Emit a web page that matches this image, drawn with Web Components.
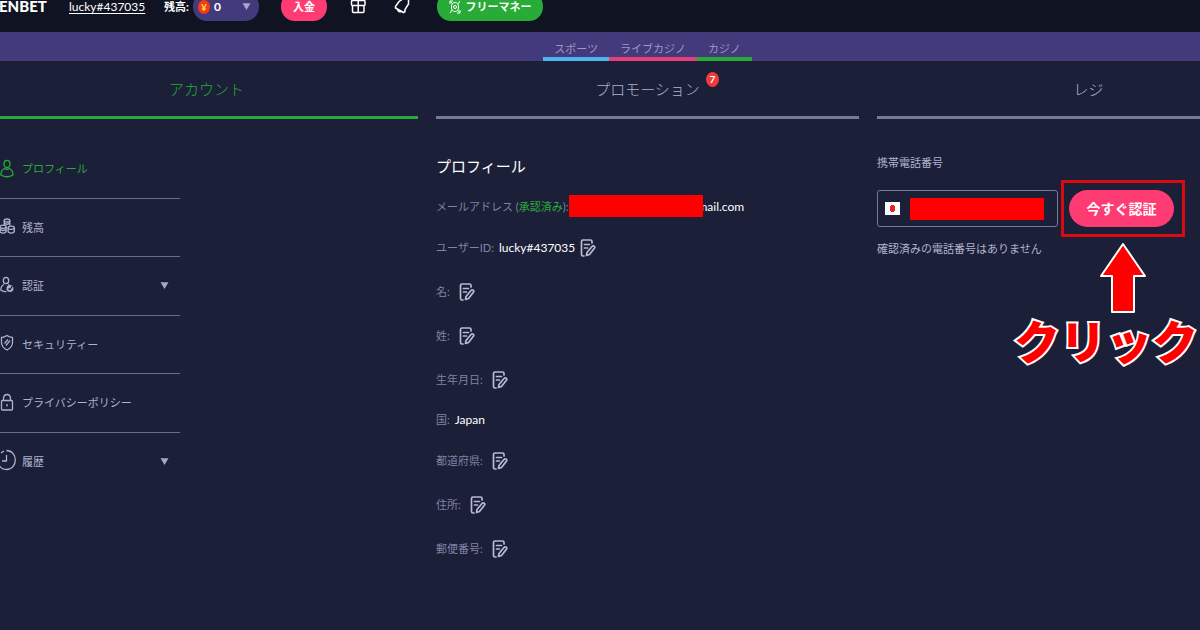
<!DOCTYPE html>
<html lang="ja">
<head>
<meta charset="utf-8">
<meta name="viewport" content="width=device-width, initial-scale=1">
<title>プロフィール</title>
<style>
:root{--bg:#1b1f38;--muted:#8083a3;--soft:#b0b3cf;--green:#29ab38;--pink:#ff3b73;--purple:#423a7a;--red:#f00}
html,body{margin:0;background:var(--bg)}
body{min-height:100vh;overflow:hidden;color:#fff;font:11px/17px Lato,"Noto Sans CJK JP",sans-serif}
</style>
</head>
<body>
<account-page></account-page>
<script>
const define = (name, html, setup) => {
  const t = document.createElement('template');
  t.innerHTML = '<style>*{box-sizing:border-box}a{color:inherit;text-decoration:none}button{font:inherit;color:inherit;border:0;padding:0;background:none}</style>' + html;
  customElements.define(name, class extends HTMLElement {
    constructor() {
      super();
      this.attachShadow({ mode: 'open' }).append(t.content.cloneNode(true));
    }
    connectedCallback() { if (setup) setup(this, this.shadowRoot); }
  });
};

const ICONS = {
  user: '<ellipse cx="7" cy="4" rx="3" ry="3.700"/><path d="M4.500 8.500C1.500 10 .800 12.500 .800 15Q7 18.500 13 15C13 12.500 12.500 10 9.500 8.500Q7 10 4.500 8.500Z"/>',
  coins: '<ellipse cx="7" cy="2.500" rx="2.800" ry="1.500"/><path d="M4.200 2.500v5M9.800 2.500v5M4.200 5q2.800 2.500 5.600 0"/><ellipse cx="3" cy="8.700" rx="3.100" ry="1.600"/><path d="M-.100 8.700v5q3.100 2.800 6.200 0v-5M-.100 11.200q3.100 2.600 6.200 0"/><ellipse cx="11.200" cy="9.700" rx="3.100" ry="1.600"/><path d="M8.100 9.700v4q3.100 2.800 6.200 0v-4"/>',
  verify: '<ellipse cx="6" cy="3.500" rx="2.700" ry="3.200"/><path d="M4 7.500C1.500 8.500.800 11 .800 13Q3 15 6.500 14.500M8 7.500l1.500 1"/><circle cx="10" cy="11.500" r="2.800" fill="currentColor"/><path d="M8.500 11.500l1.300 1.300 2.700-4" stroke="#1b1f38"/>',
  shield: '<path d="M7 .500Q9.500 2.300 12.500 2.300V8Q12 12.500 7 15Q2 12.500 1.500 8V2.300Q4.500 2.300 7 .500Z"/><path d="M4.500 8.500l3.500-4M6 10.500l4-5"/>',
  lock: '<rect x="1.500" y="6.500" width="11" height="9.500" rx="1"/><path d="M3.500 6.500V4Q4 .500 7 .500T10.500 4V6.500M7 10v2.400"/>',
  clock: '<path d="M6.500-1.500C12 -1.500 15.300 3 15.300 8S12 17.500 6.500 17.500C3 17.500.500 16 -1 13M1 1L4-1M6.500 3V9H2"/>'
};

define('caret-down', `<style>:host{display:block;width:9px;height:7px}svg{display:block}</style>
<svg width="9" height="7" aria-hidden="true"><path d="M.500.300H8.500L4.500 7Z" fill="#a5a8c4"/></svg>`);

define('site-header', `<style>
:host{display:block;height:32px;background:#101322;line-height:13px}
header{display:flex;align-items:flex-end;height:21px}
header>*{flex:none;height:29px;display:flex;align-items:center}
.brand{width:74px;padding-left:4px;font-size:15px;font-weight:900}
.name{font-size:12px;text-decoration:underline;text-underline-offset:2px;width:95px}
.label{font-weight:700;width:29px}
.wallet{width:66px;border-radius:14px;background:var(--purple);padding:0 8px 0 5px;gap:4px;font-size:12px;font-weight:700}
.yen{width:12px;height:14px;border-radius:50%;background:#f23c11;color:#ffd35a;font-size:10px;line-height:14px;text-align:center}
caret-down{margin-left:auto}
.pay{justify-content:center;width:46px;margin-left:22px;border-radius:14px;background:var(--pink);font-size:11px;font-weight:700}
.gift{margin-left:23px}.bell{margin-left:28px}
.free{justify-content:center;gap:5px;width:106px;margin-left:27px;border-radius:14px;background:var(--green);font-weight:700;font-size:11px}
svg{fill:none;stroke:#fff;stroke-width:1.500;overflow:visible}
</style>
<header>
<a class="brand" href="#">ENBET</a>
<a class="name" href="#">lucky#437035</a>
<span class="label">残高:</span>
<button class="wallet" aria-label="残高 0"><span class="yen">¥</span><span>0</span><caret-down></caret-down></button>
<button class="pay">入金</button>
<button class="gift" aria-label="ギフト"><svg width="16" height="16" viewBox="0 0 16 16"><rect x="1.500" y="1.500" width="13.500" height="5" rx="1"/><path d="M2.500 6.500v6q0 1 1 1h9.500q1 0 1-1v-6M8.200 1.500v12M8 1L5-1M8 1l3-2"/></svg></button>
<button class="bell" aria-label="お知らせ"><svg width="16" height="16" viewBox="0 0 16 16"><path d="M5 2.500L1.500 7.500V9L9.500 13.500L11 12.500V10.500L14.500 5V.500M3.500 10Q4 13.500 7 12.500M5 2.500L9.500-.500"/></svg></button>
<button class="free"><svg width="12" height="14" viewBox="0 0 12 14" style="stroke-width:1"><ellipse cx="6" cy="7" rx="3.500" ry="4.500"/><circle cx="6" cy="7" r="1.500"/><path d="M1 1l2.500 3M1 4V1h3M11 13l-2.500-3M11 10v3H8M9 4l2-3M3 10l-2 3"/></svg>フリーマネー</button>
</header>`);

define('category-nav', `<style>
:host{display:block;background:var(--purple)}
nav{display:flex;justify-content:center;padding-top:5px}
a{padding:3px 11px 0;border-bottom:4px solid;height:24px}
span{color:#9f98c6}
.s{border-color:#4cb4ee}.l{border-color:#e6407c}.c{border-color:var(--green)}
</style>
<nav><a class="s" href="#"><span>スポーツ</span></a><a class="l" href="#"><span>ライブカジノ</span></a><a class="c" href="#"><span>カジノ</span></a></nav>`);

define('section-tab', `<style>
:host{display:block}
a{display:flex;justify-content:center;align-items:center;height:58px;padding-top:2px;border-bottom:3px solid #75799a;color:var(--soft);font-size:15px;font-weight:300}
:host([current]) a{color:var(--green);border-color:var(--green)}
.t{position:relative}
.badge{position:absolute;left:100%;top:-9px;margin-left:6px;width:13px;height:15px;border-radius:50%;background:#ee3a3a;color:#fff;font-size:10px;font-weight:700;line-height:15px;text-align:center}
</style><a href="#"><span class="t"><slot></slot></span></a>`, (el, root) => {
  const n = el.getAttribute('count');
  if (n) {
    const b = document.createElement('span');
    b.className = 'badge'; b.textContent = n;
    root.querySelector('.t').append(b);
  }
});

define('menu-item', `<style>
:host{display:block;border-bottom:1px solid #6b6e8b;color:var(--soft)}
:host(:last-child){border-color:transparent}
:host([current]){color:var(--green)}
a{display:flex;align-items:center;height:100%;padding:0 11px 0 5px}
svg{flex:none;width:14px;height:18px;margin-right:8px;fill:none;stroke:currentColor;stroke-width:1.300;stroke-linejoin:round;overflow:visible}
caret-down{margin-left:auto}
</style><a href="#"><svg viewBox="0 0 14 18" aria-hidden="true"></svg><slot></slot></a>`, (el, root) => {
  root.querySelector('svg').innerHTML = ICONS[el.getAttribute('icon')];
  if (el.hasAttribute('expandable')) root.querySelector('a').append(document.createElement('caret-down'));
});

define('side-menu', `<style>
:host{display:block;padding-top:21px}
nav{display:grid;grid-auto-rows:1fr;height:351px;width:185px}
</style><nav>
<menu-item icon="user" current>プロフィール</menu-item>
<menu-item icon="coins">残高</menu-item>
<menu-item icon="verify" expandable>認証</menu-item>
<menu-item icon="shield">セキュリティー</menu-item>
<menu-item icon="lock">プライバシーポリシー</menu-item>
<menu-item icon="clock" expandable>履歴</menu-item>
</nav>`);

define('profile-row', `<style>
:host{display:flex;align-items:center;gap:5px;color:#fff;font-size:12px}
.k{color:var(--muted);font-size:11px}
button{display:none;width:16px;height:24px}
:host([editable]) button{display:block}
:host([empty]) button{margin-left:4px}
svg{display:block;margin-top:2px;fill:none;stroke:#b9bbd2;stroke-width:1.700;stroke-linecap:round;stroke-linejoin:round;overflow:visible}
</style><span class="k"><slot name="label"></slot></span><slot></slot>
<button aria-label="編集"><svg width="16" height="18" viewBox="0 0 16 18"><path d="M12 4V2.500Q12 1 10.500 1H3Q1.500 1 1.500 2.500V15.500Q1.500 17 3 17H4M4.500 5.500H9.500M4.500 9H7.500M6.500 16.500L7 13.500L12 7.500Q13 6.500 14.200 7.300T14.200 9.500L9.500 15.500Z"/></svg></button>`);

define('profile-panel', `<style>
:host{display:block;padding-top:35px}
section{display:flex;flex-direction:column;gap:20px}
h1{margin:0;font-size:15px;line-height:24px;font-weight:400}
.ok{color:var(--green)}
.mail{display:flex;align-items:center}
.redacted{width:134px;height:22px;margin:-3px -6px -2px -4px;background:var(--red);position:relative}
</style><section>
<h1>プロフィール</h1>
<profile-row><span slot="label">メールアドレス (<span class="ok">承認済み</span>):</span><span class="mail"><span class="redacted"></span>mail.com</span></profile-row>
<profile-row editable><span slot="label">ユーザーID:</span>lucky#437035</profile-row>
<profile-row editable empty><span slot="label">名:</span></profile-row>
<profile-row editable empty><span slot="label">姓:</span></profile-row>
<profile-row editable empty><span slot="label">生年月日:</span></profile-row>
<profile-row><span slot="label">国:</span>Japan</profile-row>
<profile-row editable empty><span slot="label">都道府県:</span></profile-row>
<profile-row editable empty><span slot="label">住所:</span></profile-row>
<profile-row editable empty><span slot="label">郵便番号:</span></profile-row>
</section>`);

define('click-callout', `<style>
:host{display:flex;flex-direction:column;align-items:flex-end;color:var(--red);pointer-events:none}
svg{margin-right:52px;overflow:visible}
span{font:900 46px/52px "Noto Sans CJK JP",sans-serif;white-space:nowrap;-webkit-text-stroke:4px #fff;paint-order:stroke fill}
</style>
<svg width="46" height="70" viewBox="0 0 46 70" aria-hidden="true"><path d="M23 1L45 33H34V69H12V33H1Z" fill="#f00" stroke="#fff" stroke-width="2" stroke-linejoin="round"/></svg>
<span><slot></slot></span>`);

define('phone-verify', `<style>
:host{display:block;padding-top:35px;color:var(--soft)}
label{display:block}
.line{display:flex;gap:11px;margin:19px 0 13px}
.field{display:flex;align-items:center;gap:10px;width:181px;height:37px;padding:0 7px;border:1px solid #777a99;border-radius:3px}
.flag{width:15px;height:13px;background:radial-gradient(ellipse 3px 4px,#e62424 90%,#fff)}
input{width:134px;height:22px;border:0;padding:0;background:var(--red)}
.action{position:relative}
.action::before{content:"";position:absolute;inset:-10px -11px -10px -8px;border:3px solid #d90b10}
button{position:relative;width:105px;height:37px;border-radius:19px;background:var(--pink);color:#fff;font-size:14px;font-weight:700}
click-callout{position:absolute;right:-24px;top:53px}
</style>
<label for="phone">携帯電話番号</label>
<div class="line"><div class="field"><span class="flag"></span><input id="phone" type="tel"></div>
<div class="action"><button>今すぐ認証</button><click-callout>クリック</click-callout></div></div>
<div>確認済みの電話番号はありません</div>`);

define('account-page', `<style>
:host{display:block;overflow:hidden}
.wide{margin-left:-5px;width:108.75%}
main{display:grid;grid-template-columns:repeat(3,1fr);column-gap:18px}
</style>
<div class="wide">
<site-header></site-header>
<category-nav></category-nav>
<main>
<section-tab current>アカウント</section-tab><section-tab count="7">プロモーション</section-tab><section-tab>レジ</section-tab>
<side-menu></side-menu><profile-panel></profile-panel><phone-verify></phone-verify>
</main>
</div>`);
</script>
</body>
</html>
